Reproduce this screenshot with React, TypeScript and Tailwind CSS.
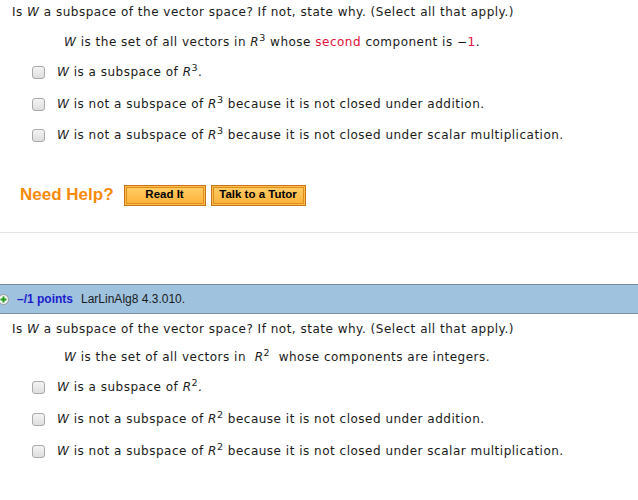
import React from "react";

const Check = () => (
  <span className="inline-block w-[13px] h-[13px] rounded-[3px] border border-[#a9a9a9] bg-gradient-to-b from-[#f4f4f4] to-[#dedede] shrink-0" />
);

const W = () => <i>W</i>;
const R = ({ n }: { n: string }) => (
  <>
    <i>R</i>
    <span className="text-[9.5px] self-start -mt-[2px]">{n}</span>
  </>
);

const Opt = ({ children, cls }: { children: React.ReactNode; cls: string }) => (
  <div className={`flex items-center h-[18px] pl-[32px] ${cls}`}>
    <Check />
    <span className="ml-[12px] whitespace-nowrap flex items-center">{children}</span>
  </div>
);

export default function App() {
  return (
    <div className="w-[638px] h-[500px] overflow-hidden bg-white text-[#1a1a1a] font-['DejaVu_Sans'] text-[12px] tracking-[0.5px] flex flex-col">
      <div className="flex items-center h-[18px] mt-[3px] pl-[12px] whitespace-nowrap">
        Is&nbsp;<W />&nbsp;a subspace of the vector space? If not, state why. (Select all that apply.)
      </div>
      <div className="flex items-center h-[18px] mt-[12px] pl-[64px] whitespace-nowrap">
        <W />&nbsp;is the set of all vectors in&nbsp;<R n="3" />&nbsp;whose&nbsp;
        <span className="text-[#e0103a]">second</span>&nbsp;component is −<span className="text-[#e0103a]">1</span>.
      </div>
      <Opt cls="mt-[12px]">
        <W />&nbsp;is a subspace of&nbsp;<R n="3" />.
      </Opt>
      <Opt cls="mt-[14px]">
        <W />&nbsp;is not a subspace of&nbsp;<R n="3" />&nbsp;because it is not closed under addition.
      </Opt>
      <Opt cls="mt-[13px]">
        <W />&nbsp;is not a subspace of&nbsp;<R n="3" />&nbsp;because it is not closed under scalar multiplication.
      </Opt>

      <div className="flex items-center h-[22px] mt-[40px] pl-[20px] tracking-normal">
        <span className="font-['Liberation_Sans'] font-bold text-[17px] text-[#f58a0b]">Need Help?</span>
        <button className="ml-[10px] w-[82px] h-[21px] border border-[#c8741a] bg-[#ffbd4a] p-[1px] font-['Liberation_Sans'] font-bold text-[11.5px] text-black">
          <span className="flex items-center justify-center w-full h-full border border-[#e08d1f] bg-gradient-to-b from-[#ffcb62] to-[#ffb43c]">Read It</span>
        </button>
        <button className="ml-[5px] w-[95px] h-[21px] border border-[#c8741a] bg-[#ffbd4a] p-[1px] font-['Liberation_Sans'] font-bold text-[11.5px] text-black">
          <span className="flex items-center justify-center w-full h-full border border-[#e08d1f] bg-gradient-to-b from-[#ffcb62] to-[#ffb43c]">Talk to a Tutor</span>
        </button>
      </div>

      <div className="mt-[26px] h-[1px] bg-[#c8c8c8] border-b border-[#e4e4e4]" />

      <div className="mt-[51px] h-[30px] bg-[#9fc3df] border-y border-[#7b8e9e] flex items-center font-['Liberation_Sans'] text-[12px] tracking-normal">
        <span className="-ml-[2px] w-[11px] h-[11px] rounded-full bg-[#f4f4f4] border border-[#9a9a9a] flex items-center justify-center shrink-0">
          <svg width="7" height="7" viewBox="0 0 7 7">
            <path d="M3.5 0.5v6M0.5 3.5h6" stroke="#1f9a1f" strokeWidth="2" />
          </svg>
        </span>
        <span className="ml-[8px] font-bold text-[#1c1ccc]">–/1 points</span>
        <span className="ml-[8px] text-[#1a1a1a]">LarLinAlg8 4.3.010.</span>
      </div>

      <div className="flex items-center h-[18px] mt-[6px] pl-[12px] whitespace-nowrap">
        Is&nbsp;<W />&nbsp;a subspace of the vector space? If not, state why. (Select all that apply.)
      </div>
      <div className="flex items-center h-[18px] mt-[10px] pl-[64px] whitespace-nowrap">
        <W />&nbsp;is the set of all vectors in&nbsp;&nbsp;<R n="2" />&nbsp;&nbsp;whose components are integers.
      </div>
      <Opt cls="mt-[12px]">
        <W />&nbsp;is a subspace of&nbsp;<R n="2" />.
      </Opt>
      <Opt cls="mt-[14px]">
        <W />&nbsp;is not a subspace of&nbsp;<R n="2" />&nbsp;because it is not closed under addition.
      </Opt>
      <Opt cls="mt-[14px]">
        <W />&nbsp;is not a subspace of&nbsp;<R n="2" />&nbsp;because it is not closed under scalar multiplication.
      </Opt>
    </div>
  );
}
